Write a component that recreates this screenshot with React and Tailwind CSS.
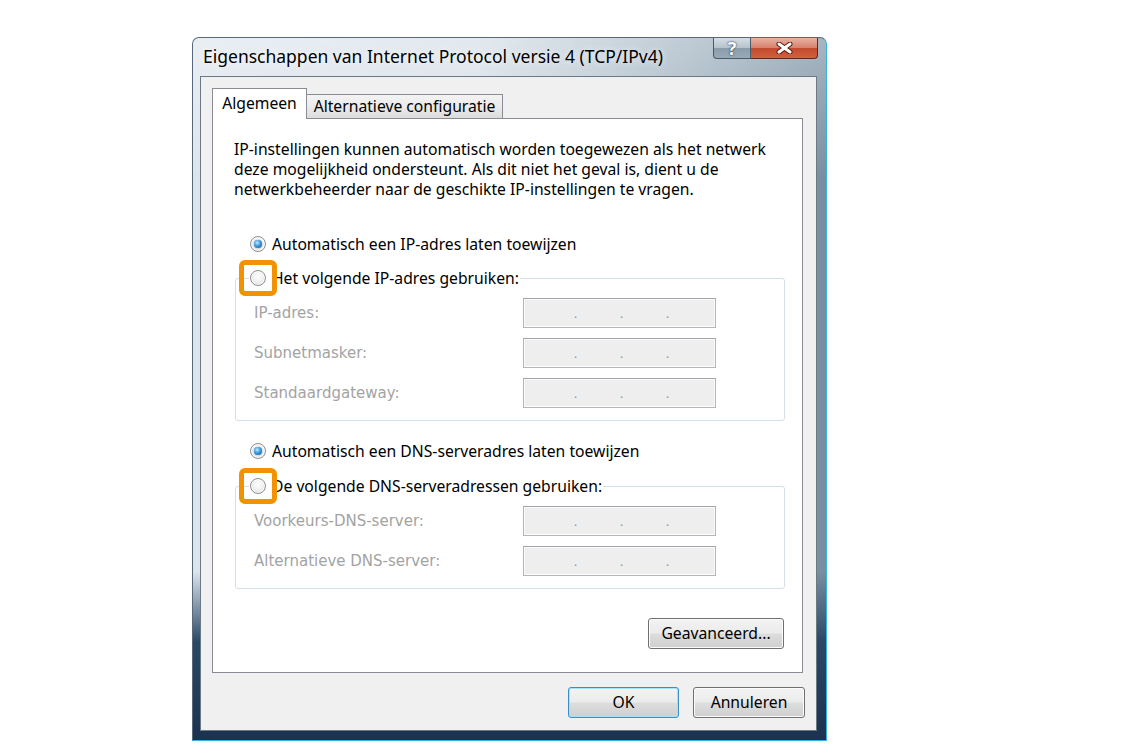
import React from 'react';

const ui = { fontFamily: '"Noto Sans", "Open Sans", sans-serif' };
const grayFont = { fontFamily: '"DejaVu Sans", Verdana, sans-serif' };

function Radio({ checked }) {
  return (
    <span className="grid h-[16px] w-[16px] shrink-0 place-items-center rounded-full border border-[#8c8e90] bg-[radial-gradient(circle_at_50%_40%,#ffffff_0%,#f1f1f1_45%,#cfd0d2_100%)] shadow-[inset_0_0_0_1px_#fdfdfd]">
      {checked && (
        <span className="h-[8px] w-[8px] rounded-full bg-[radial-gradient(circle_at_40%_35%,#bdeeff_0%,#3b9ae0_45%,#0d4f93_100%)] shadow-[0_0_1px_#0b3b70]" />
      )}
    </span>
  );
}

function RadioRow({ checked, label, highlight }) {
  return (
    <div className="relative flex h-[20px] items-center gap-[6px] text-[15.7px] text-black" style={ui}>
      <Radio checked={checked} />
      {highlight && (
        <span className="pointer-events-none absolute left-[-11px] top-[-8px] h-[36px] w-[38px] rounded-[6px] border-[5px] border-[#f39200]" />
      )}
      <span className="leading-[20px]">{label}</span>
    </div>
  );
}

function IpBox() {
  return (
    <div className="relative h-[30px] w-[193px] border border-[#b3b6bb] border-t-[#9fa3a9] bg-[#eeeeee] shadow-[inset_0_0_0_1px_#fbfbfb]">
      <div className="flex h-full items-end pb-[7px] pl-[50px] text-[12px] leading-none text-[#8b95ab]">
        <span className="w-[46px]">.</span>
        <span className="w-[46px]">.</span>
        <span className="w-[46px]">.</span>
      </div>
    </div>
  );
}

function FieldRow({ label }) {
  return (
    <div className="flex h-[30px] items-center justify-between pr-[68px]">
      <span className="text-[15px] text-[#a3a3a3]" style={grayFont}>{label}</span>
      <IpBox />
    </div>
  );
}

function Group({ legend, rows }) {
  return (
    <fieldset className="w-[550px] rounded-[3px] border border-[#d5dfe6] pb-[12px] pl-[18px]">
      <legend className="-ml-[5px] px-[1px]">
        <RadioRow label={legend} highlight />
      </legend>
      <div className="mt-[10px] flex flex-col gap-[10px]">
        {rows.map((r) => (
          <FieldRow key={r} label={r} />
        ))}
      </div>
    </fieldset>
  );
}

function VistaButton({ children, width, focused }) {
  return (
    <button
      className={`h-[31px] ${width} rounded-[3px] border text-[15.7px] text-black bg-[linear-gradient(to_bottom,#f3f3f3_0%,#ebebeb_48%,#dddddd_52%,#cfcfcf_100%)] ${
        focused
          ? 'border-[#3c8fc6] shadow-[inset_0_0_0_1px_#a6e3fa]'
          : 'border-[#707070] shadow-[inset_0_0_0_1px_#fbfbfb]'
      }`}
      style={ui}
    >
      {children}
    </button>
  );
}

function CloseGlyph() {
  return (
    <svg width="17" height="12" viewBox="0 0 17 12">
      <path d="M3 2 L14 10 M14 2 L3 10" stroke="#5b1a10" strokeWidth="5" strokeLinecap="round" />
      <path d="M3 2 L14 10 M14 2 L3 10" stroke="#ffffff" strokeWidth="3" strokeLinecap="round" />
    </svg>
  );
}

export default function App() {
  return (
    <div className="min-h-[753px] w-[1128px] bg-white pl-[192px] pt-[37px]">
      <div className="h-[704px] w-[635px] overflow-hidden rounded-t-[7px] border border-[#56687a] border-b-[#35b4e4] border-r-[#35b4e4] bg-[linear-gradient(to_right,#dde5ec_0%,#d4dee6_45%,#9fb1bf_78%,#788ea0_100%)]">
        <div className="flex h-full flex-col bg-[linear-gradient(to_bottom,#ffffff59_0%,#ffffff00_20%,#28466400_76%,#2a4866_86%,#1b3250_100%)]">
          <div className="flex h-[37px] items-start justify-between">
            <div className="pl-[10px] pt-[5px] text-[17.5px] leading-[26px] text-black [text-shadow:0_0_6px_#ffffff]" style={ui}>
              Eigenschappen van Internet Protocol versie 4 (TCP/IPv4)
            </div>
            <div className="mr-[8px] flex">
              <div className="grid h-[21px] w-[38px] place-items-center rounded-bl-[4px] border border-t-0 border-[#4b5a66] bg-[linear-gradient(to_bottom,#d6dee5_0%,#b7c3cd_48%,#8b9cab_52%,#98aab8_100%)]">
                <span className="text-[18px] font-bold leading-none text-white [text-shadow:0_0_2px_#2c3a46,0_0_1px_#2c3a46]" style={ui}>?</span>
              </div>
              <div className="grid h-[21px] w-[67px] place-items-center rounded-br-[4px] border border-l-0 border-t-0 border-[#5a2a22] bg-[linear-gradient(to_bottom,#e8b3a4_0%,#d7826c_48%,#c24a2f_52%,#d4603f_100%)]">
                <CloseGlyph />
              </div>
            </div>
          </div>

          <div className="ml-[7px] mr-[9px] mt-[1px] flex h-[655px] flex-col border border-[#6b7985] bg-[#f0f0f0] pl-[11px] pr-[13px] pt-[11px]">
            <div className="flex items-end">
              <div className="relative z-10 -mb-[1px] flex h-[31px] w-[95px] items-center justify-center border border-b-0 border-[#898c95] bg-white text-[15.7px] text-black" style={ui}>
                Algemeen
              </div>
              <div className="flex h-[24px] w-[196px] items-center justify-center border border-b-0 border-l-0 border-[#898c95] bg-[linear-gradient(to_bottom,#f3f3f3_0%,#ebebeb_50%,#dcdcdc_100%)] text-[15.7px] text-black" style={ui}>
                Alternatieve configuratie
              </div>
            </div>

            <div className="flex h-[555px] flex-col border border-[#898c95] bg-white pl-[21px] pr-[17px] pt-[20px]">
              <p className="text-[15.7px] leading-[20px] text-black" style={ui}>
                IP-instellingen kunnen automatisch worden toegewezen als het netwerk
                <br />
                deze mogelijkheid ondersteunt. Als dit niet het geval is, dient u de
                <br />
                netwerkbeheerder naar de geschikte IP-instellingen te vragen.
              </p>

              <div className="mt-[35px] pl-[16px]">
                <RadioRow checked label="Automatisch een IP-adres laten toewijzen" />
              </div>
              <div className="mt-[14px] pl-[1px]">
                <Group legend="Het volgende IP-adres gebruiken:" rows={['IP-adres:', 'Subnetmasker:', 'Standaardgateway:']} />
              </div>

              <div className="mt-[20px] pl-[16px]">
                <RadioRow checked label="Automatisch een DNS-serveradres laten toewijzen" />
              </div>
              <div className="mt-[15px] pl-[1px]">
                <Group legend="De volgende DNS-serveradressen gebruiken:" rows={['Voorkeurs-DNS-server:', 'Alternatieve DNS-server:']} />
              </div>

              <div className="mt-[29px] flex justify-end pr-[1px]">
                <VistaButton width="w-[136px]">Geavanceerd...</VistaButton>
              </div>
            </div>

            <div className="-mr-[2px] mt-[14px] flex justify-end gap-[14px]">
              <VistaButton width="w-[111px]" focused>OK</VistaButton>
              <VistaButton width="w-[112px]">Annuleren</VistaButton>
            </div>
          </div>
        </div>
      </div>
    </div>
  );
}
